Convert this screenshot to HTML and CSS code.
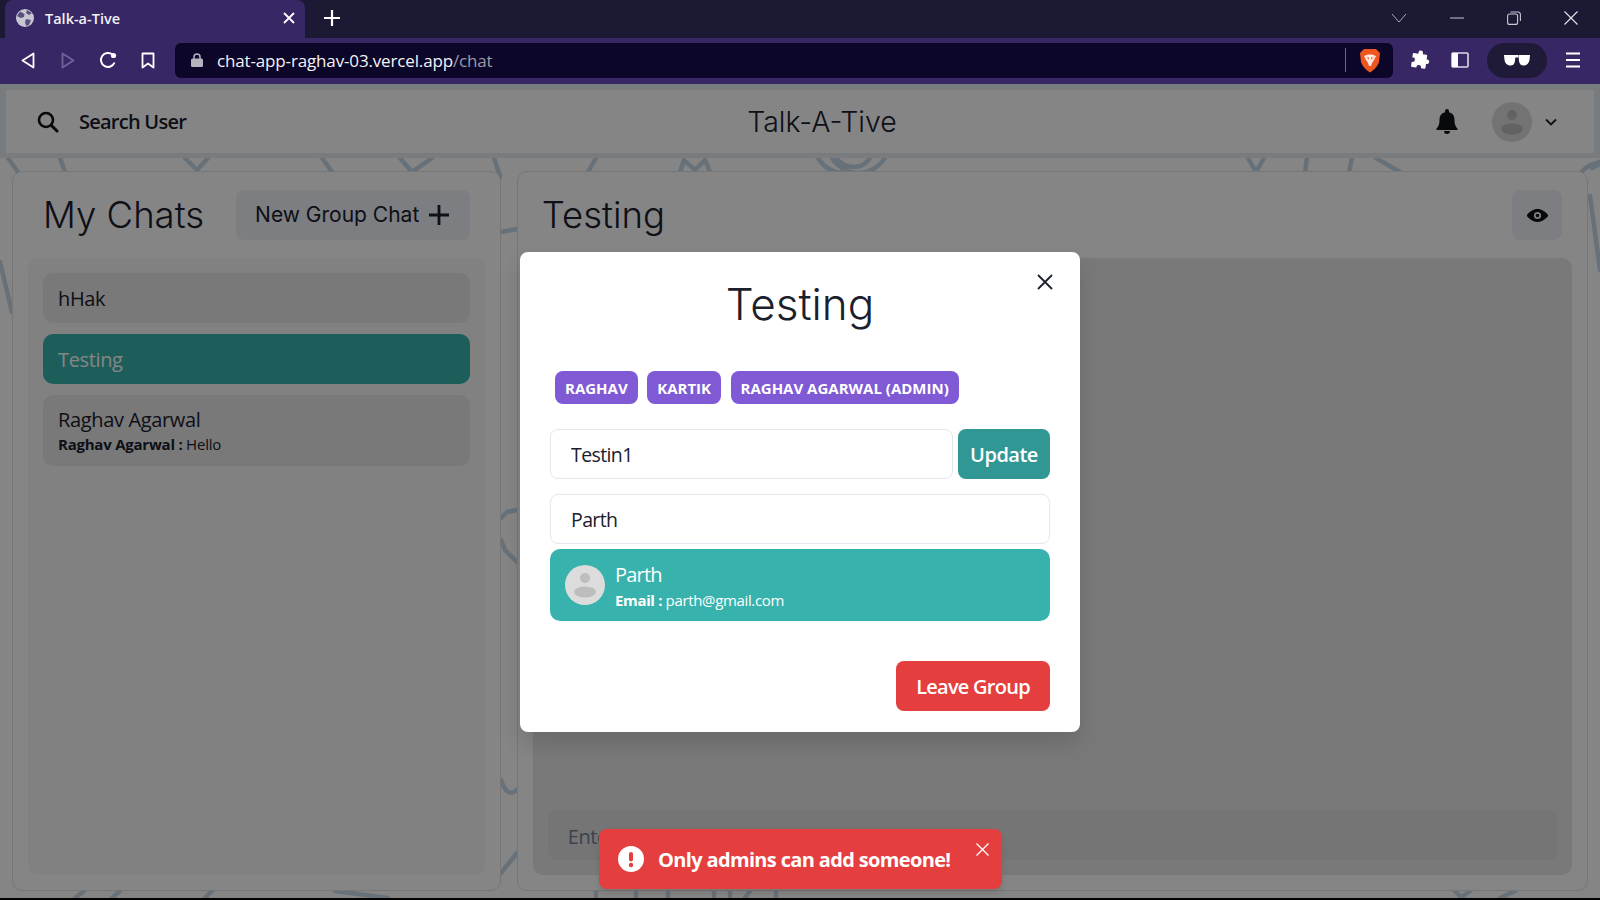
FILE: index.html
```html
<!DOCTYPE html>
<html lang="en">
<head>
    <meta charset="UTF-8">
    <meta name="viewport" content="width=device-width, initial-scale=1.0">
    <title>Talk-a-Tive</title>
    <link rel="stylesheet" href="styles.css">
</head>
<body>
    <!-- browser chrome -->
    <section class="tabstrip">
        <div class="tab">
            <svg class="globe" width="18" height="18" viewBox="0 0 18 18"><circle cx="9" cy="9" r="9" fill="#c9c6d3"/><path d="M4 2.500 8.500 5 8 8 4.500 9 1 7ZM10 10l5 1-2 5-3 1-1-4ZM11 1l5 3-3 2-3-2Z" fill="#5a5080"/></svg>
            <span class="tab-title">Talk-a-Tive</span>
            <svg class="tab-close" width="12" height="12" viewBox="0 0 12 12"><path d="M1 1 11 11M11 1 1 11" stroke="#fff" stroke-width="1.800"/></svg>
        </div>
        <svg class="new-tab" width="16" height="16" viewBox="0 0 16 16"><path d="M8 0V16M0 8H16" stroke="#fff" stroke-width="2.200"/></svg>
        <div class="win-controls">
            <svg width="16" height="10" viewBox="0 0 16 10"><path d="M1 1 8 9 15 1" fill="none" stroke="#a9a7b8" stroke-width="1"/></svg>
            <svg width="14" height="2" viewBox="0 0 14 2"><path d="M0 1H14" stroke="#a9a7b8" stroke-width="1.200"/></svg>
            <svg width="14" height="14" viewBox="0 0 14 14"><rect x=".6" y="3" width="10" height="10.400" rx="2" fill="none" stroke="#c9c8d2" stroke-width="1.100"/><path d="M3.500 1H11a2.400 2.400 0 0 1 2.400 2.400V10" fill="none" stroke="#c9c8d2" stroke-width="1.100"/></svg>
            <svg width="14" height="14" viewBox="0 0 14 14"><path d="M.5.500 13.500 13.500M13.500.500.5 13.500" stroke="#e6e5ea" stroke-width="1.100"/></svg>
        </div>
    </section>

    <section class="toolbar">
        <div class="tool-btn"><svg width="14" height="17" viewBox="0 0 14 17"><path d="M12.500 1.500 1.500 8.500 12.500 15.500Z" fill="none" stroke="#fff" stroke-width="1.800" stroke-linejoin="round"/></svg></div>
        <div class="tool-btn"><svg width="14" height="17" viewBox="0 0 14 17"><path d="M1.500 1.500 12.500 8.500 1.500 15.500Z" fill="none" stroke="#6f6396" stroke-width="1.800" stroke-linejoin="round"/></svg></div>
        <div class="tool-btn"><svg width="18" height="18" viewBox="0 0 18 18"><path d="M15.500 11.500A7 7 0 1 1 13.500 3.600" fill="none" stroke="#fff" stroke-width="2"/><circle cx="14.500" cy="4.500" r="2.600" fill="#fff"/></svg></div>
        <div class="tool-btn"><svg width="14" height="17" viewBox="0 0 14 17"><path d="M1.500 1.500H12.500V15.500L7 11.500 1.500 15.500Z" fill="none" stroke="#fff" stroke-width="1.800" stroke-linejoin="round"/></svg></div>

        <div class="address">
            <svg class="lock" width="12" height="14" viewBox="0 0 12 14"><path d="M3 6V4a3 3 0 0 1 6 0v2" fill="none" stroke="#b5b3bd" stroke-width="1.500"/><rect y="5.500" width="12" height="8.500" rx="1.500" fill="#b5b3bd"/></svg>
            <span class="url">chat-app-raghav-03.vercel.app<span class="url-path">/chat</span></span>
            <span class="address-sep"></span>
            <svg class="brave" width="22" height="25" viewBox="0 0 22 25"><path d="M5 1H17L21 5 20 14C19 18 14 23 11 24.500 8 23 3 18 2 14L1 5Z" fill="#f1561f"/><path d="M5 8 9 6.500H13L17 8 15 12 13 15 12 18H10L9 15 7 12Z" fill="#ffe9dc"/><path d="M7.500 9.500H10V11.500ZM14.500 9.500H12V11.500Z" fill="#f1561f"/></svg>
        </div>

        <div class="tool-btn"><svg width="20" height="20" viewBox="0 0 20 20"><path d="M8 1a2.500 2.500 0 0 1 4 1.500V4h3.500a1 1 0 0 1 1 1v3.500H18a2.500 2.500 0 0 1 0 4.500h-1.500V17a1 1 0 0 1-1 1H12v-1.500a2.500 2.500 0 0 0-4.500 0V18H3a1 1 0 0 1-1-1v-4h1.500a2.500 2.500 0 0 0 0-4.500H2V5a1 1 0 0 1 1-1h4.500V2.500Z" fill="#fff" transform="rotate(8 10 10)"/></svg></div>
        <div class="tool-btn"><svg width="18" height="16" viewBox="0 0 18 16"><rect x="1" y="1" width="16" height="14" rx="1" fill="none" stroke="#dcdae6" stroke-width="1.600"/><rect x="1" y="1" width="6" height="14" fill="#fff"/></svg></div>
        <div class="guest-pill"><svg width="26" height="12" viewBox="0 0 26 12"><path d="M0 1H11.500L11 7C10.500 10 9 11.500 6.500 11.500 3 11.500 1 9 .5 6ZM26 1H14.500L15 7C15.500 10 17 11.500 19.500 11.500 23 11.500 25 9 25.500 6ZM11 1H15V3.500H11Z" fill="#fff"/></svg></div>
        <div class="tool-btn"><svg width="16" height="16" viewBox="0 0 16 16"><path d="M1 1.500H15M1 8H15M1 14.500H15" stroke="#fff" stroke-width="1.800"/></svg></div>
    </section>

    <!-- the app -->
    <main class="page">
        <svg class="doodles" viewBox="0 0 1600 814" width="1600" height="814">
            <g transform="translate(0 -84)" fill="none" stroke="#c6d8e8" stroke-width="4.500" stroke-linecap="round">
                <path d="M8 158 18 172M60 158 65 172M185 158 197 170 208 158M322 158 332 172M400 158 412 172 432 158M494 158 500 176 496 186M588 172 596 158M680 172 684 160 695 170 705 160 710 172"/>
                <path d="M818 158C826 170 836 175 850 172 840 168 834 162 832 158M850 172C866 176 878 168 885 158M836 158C846 170 862 170 870 158"/>
                <path d="M1248 158 1256 172 1264 158M1307 158 1305 172M1352 158 1349 172M1376 158 1400 172M1600 162C1590 164 1584 168 1580 174"/>
                <path d="M0 262 12 312M1590 196 1600 270M1592 168 1600 164M501 232 517 229M501 518 507 512 517 510M501 540 505 550 517 562M501 780C505 792 510 796 517 790M501 873 517 853"/>
                <path d="M75 898 84 891M112 898 120 891M205 898 212 891M335 891 388 898M596 891V898M636 891V898M668 891V898M714 891V898M730 891V898M750 891 745 898M776 891V898M1455 891 1462 898M1470 891 1460 898M1500 898 1515 891"/>
            </g>
        </svg>

        <header class="topbar">
            <div class="search-btn">
                <svg width="22" height="22" viewBox="0 0 22 22"><circle cx="9" cy="9" r="7" fill="none" stroke="#101216" stroke-width="2.600"/><path d="M14.200 14.200 20 20" stroke="#101216" stroke-width="3" stroke-linecap="round"/></svg>
                <span>Search User</span>
            </div>
            <h1 class="brand">Talk-A-Tive</h1>
            <div class="topbar-right">
                <svg class="bell" width="22" height="26" viewBox="0 0 22 26"><path d="M11 0a2 2 0 0 1 2 2v1.200c3.800.8 5.500 4 5.500 7.800 0 5 1.500 7 3 8.500.5.800 0 1.500-1 1.500H1.500c-1 0-1.500-.7-1-1.500C2 18 3.500 16 3.500 11c0-3.800 1.700-7 5.500-7.800V2a2 2 0 0 1 2-2ZM8 22h6a3 3 0 0 1-6 0Z" fill="#101216"/></svg>
                <svg class="avatar" width="40" height="40" viewBox="0 0 40 40"><circle cx="20" cy="20" r="20" fill="#dcdcdc"/><circle cx="20" cy="13" r="5" fill="#bdbdbd"/><ellipse cx="20" cy="27" rx="11" ry="5.500" fill="#bdbdbd"/></svg>
                <svg class="chevron" width="12" height="8" viewBox="0 0 12 8"><path d="M1 1.500 6 6.500 11 1.500" fill="none" stroke="#1a202c" stroke-width="1.800"/></svg>
            </div>
        </header>

        <div class="panels">
            <section class="panel my-chats">
                <div class="panel-head">
                    <h2 class="panel-title">My Chats</h2>
                    <div class="group-btn">
                        <span>New Group Chat</span>
                        <svg width="22" height="22" viewBox="0 0 22 22"><path d="M11 1V21M1 11H21" stroke="#1a202c" stroke-width="2.800"/></svg>
                    </div>
                </div>
                <div class="chat-list">
                    <div class="chat-item"><div class="chat-name">hHak</div></div>
                    <div class="chat-item active"><div class="chat-name">Testing</div></div>
                    <div class="chat-item tall">
                        <div class="chat-name">Raghav Agarwal</div>
                        <div class="chat-last"><b>Raghav Agarwal :</b> Hello</div>
                    </div>
                </div>
            </section>

            <section class="panel chat-box">
                <div class="panel-head">
                    <h2 class="panel-title">Testing</h2>
                    <div class="eye-btn">
                        <svg width="21" height="21" viewBox="0 0 24 24"><path d="M23.400 10.500C20.800 7.600 16.400 4.500 12 4.600 7.600 4.500 3.200 7.600.6 10.500a2.200 2.200 0 0 0 0 3C3.200 16.400 7.500 19.500 12 19.400c4.500.1 8.800-3 11.400-5.900a2.200 2.200 0 0 0 0-3ZM7.900 12a4.100 4.100 0 1 1 8.200 0 4.100 4.100 0 0 1-8.200 0Z" fill="#101216"/><circle cx="12" cy="12" r="2" fill="#101216"/></svg>
                    </div>
                </div>
                <div class="messages">
                    <input class="message-input" placeholder="Enter a message..">
                </div>
            </section>
        </div>

        <!-- modal open over everything -->
        <div class="overlay">
            <div class="modal">
                <svg class="modal-close" width="16" height="16" viewBox="0 0 16 16"><path d="M1 1 15 15M15 1 1 15" stroke="#1a202c" stroke-width="1.800"/></svg>
                <h2 class="modal-title">Testing</h2>
                <div class="chips">
                    <span class="chip">Raghav</span>
                    <span class="chip">Kartik</span>
                    <span class="chip">Raghav Agarwal (Admin)</span>
                </div>
                <div class="rename-row">
                    <input class="field" value="Testin1">
                    <div class="btn btn-update">Update</div>
                </div>
                <input class="field field-full" value="Parth">
                <div class="user-result">
                    <svg class="avatar" width="40" height="40" viewBox="0 0 40 40"><circle cx="20" cy="20" r="20" fill="#dcdcdc"/><circle cx="20" cy="13" r="5" fill="#bdbdbd"/><ellipse cx="20" cy="27" rx="11" ry="5.500" fill="#bdbdbd"/></svg>
                    <div>
                        <div class="user-name">Parth</div>
                        <div class="user-mail"><b>Email :</b> parth@gmail.com</div>
                    </div>
                </div>
                <div class="modal-foot">
                    <div class="btn btn-leave">Leave Group</div>
                </div>
            </div>

            <div class="toast">
                <svg width="26" height="26" viewBox="0 0 26 26"><circle cx="13" cy="13" r="13" fill="#fff"/><rect x="11" y="6" width="4" height="9.500" rx="2" fill="#e53e3e"/><circle cx="13" cy="19" r="2.200" fill="#e53e3e"/></svg>
                <span class="toast-text">Only admins can add someone!</span>
                <svg class="toast-close" width="13" height="13" viewBox="0 0 13 13"><path d="M.5.500 12.500 12.500M12.500.500.5 12.500" stroke="#fff" stroke-width="1.300"/></svg>
            </div>
        </div>
    </main>
</body>
</html>
```

FILE: styles.css
```css
* {
    box-sizing: border-box;
}

html, body {
    height: 100%;
}

body {
    margin: 0;
    display: flex;
    flex-direction: column;
    overflow: hidden;
    background-color: #000;
    font-family: "Open Sans", "Noto Sans", sans-serif;
    color: #1a202c;
}

h1, h2 {
    margin: 0;
    font-weight: 300;
}

/* browser chrome */
.tabstrip {
    height: 38px;
    display: flex;
    align-items: center;
    padding-left: 5px;
    background-color: #1c1934;
}

.tab {
    width: 300px;
    height: 100%;
    display: flex;
    align-items: center;
    padding: 0 10px 2px 11px;
    background-color: #372865;
    border-radius: 8px 8px 0 0;
}

.tab-title {
    flex: 1;
    margin-left: 11px;
    font-size: 14.5px;
    font-weight: 600;
    color: #f1f0f5;
}

.new-tab {
    margin-left: 19px;
    margin-bottom: 2px;
}

.win-controls {
    margin-left: auto;
    width: 209px;
    padding-right: 22px;
    padding-bottom: 2px;
    display: flex;
    align-items: center;
    justify-content: space-between;
}

.toolbar {
    height: 46px;
    display: flex;
    align-items: center;
    padding: 0 7px 2px 8px;
    background-color: #372865;
}

.tool-btn {
    width: 40px;
    height: 35px;
    flex-shrink: 0;
    display: flex;
    align-items: center;
    justify-content: center;
}

.address {
    flex: 1;
    height: 35px;
    margin: 0 7px;
    padding: 0 12px 0 16px;
    display: flex;
    align-items: center;
    background-color: #0c0628;
    border-radius: 6px;
}

.url {
    margin-left: 14px;
    font-size: 17px;
    letter-spacing: -0.15px;
    color: #f4f3f7;
}

.url-path {
    color: #9d9aa8;
}

.address-sep {
    width: 1px;
    height: 24px;
    margin-left: auto;
    margin-right: 13px;
    background-color: #6a6780;
}

.guest-pill {
    width: 60px;
    height: 35px;
    margin: 0 6px 0 7px;
    display: flex;
    align-items: center;
    justify-content: center;
    background-color: #1e1a38;
    border-radius: 18px;
}

/* app */
.page {
    position: relative;
    height: 814px;
    background-color: #fff;
}

.doodles {
    position: absolute;
    top: 0;
    left: 0;
    filter: blur(0.7px);
}

.topbar {
    position: relative;
    height: 74px;
    display: flex;
    align-items: center;
    padding: 0 37px 0 31px;
    background-color: #fff;
    border: 6px solid #e8edf3;
    border-bottom-width: 5px;
}

.search-btn {
    display: flex;
    align-items: center;
    gap: 20px;
    font-size: 20px;
    font-weight: 600;
    letter-spacing: -0.75px;
}

.brand {
    position: absolute;
    left: 0;
    right: 0;
    text-align: center;
    padding-left: 44px;
    font-family: Inter, sans-serif;
    font-size: 28.5px;
    pointer-events: none;
}

.topbar-right {
    margin-left: auto;
    display: flex;
    align-items: center;
}

.bell {
    margin-right: 34px;
}

.chevron {
    margin-left: 13px;
}

.panels {
    position: relative;
    display: flex;
    gap: 16px;
    padding: 13px 12px 0;
}

.panel {
    height: 720px;
    padding: 0 15px 15px;
    display: flex;
    flex-direction: column;
    background-color: #fff;
    border: 1px solid #e2e2e2;
    border-radius: 10px;
}

.my-chats {
    width: 489px;
}

.chat-box {
    width: 1072px;
}

.panel-head {
    height: 86px;
    flex-shrink: 0;
    display: flex;
    align-items: center;
    justify-content: space-between;
    padding: 0 9px 0 15px;
}

.chat-box .panel-head {
    padding: 0 10px 0 9px;
}

.panel-title {
    font-family: Inter, sans-serif;
    font-size: 36.5px;
}

.group-btn {
    width: 234px;
    height: 50px;
    margin-right: 6px;
    padding-bottom: 1px;
    display: flex;
    align-items: center;
    justify-content: center;
    gap: 9px;
    font-family: Inter, sans-serif;
    font-size: 21px;
    background-color: #edf2f7;
    border-radius: 8px;
}

.eye-btn {
    width: 50px;
    height: 50px;
    display: flex;
    align-items: center;
    justify-content: center;
    background-color: #edf2f7;
    border-radius: 8px;
}

.chat-list {
    flex: 1;
    padding: 15px;
    background-color: #f8f8f8;
    border-radius: 10px;
    display: flex;
    flex-direction: column;
    gap: 11px;
}

.chat-item {
    height: 50px;
    padding: 2px 15px 0;
    display: flex;
    flex-direction: column;
    justify-content: center;
    background-color: #e8e8e8;
    border-radius: 10px;
}

.chat-item.tall {
    height: 71px;
    padding-top: 0;
}

.chat-item.active {
    background-color: #38b2ac;
    color: #fff;
}

.chat-name {
    font-size: 20px;
    line-height: 26px;
    letter-spacing: -0.35px;
}

.chat-last {
    font-size: 15px;
    line-height: 22px;
    letter-spacing: -0.23px;
}

.messages {
    flex: 1;
    padding: 15px;
    display: flex;
    flex-direction: column;
    justify-content: flex-end;
    background-color: #e8e8e8;
    border-radius: 10px;
}

.message-input {
    height: 50px;
    padding: 2px 20px 0;
    font: 20px "Open Sans", sans-serif;
    letter-spacing: -0.4px;
    background-color: #e0e0e0;
    border: none;
    border-radius: 8px;
}

.message-input::placeholder {
    color: #718096;
}

/* modal layer */
.overlay {
    position: absolute;
    top: 0;
    left: 0;
    right: 0;
    bottom: 0;
    display: flex;
    justify-content: center;
    padding-top: 168px;
    background-color: rgba(0, 0, 0, 0.48);
}

.modal {
    position: relative;
    width: 560px;
    height: 480px;
    padding: 0 30px;
    background-color: #fff;
    border-radius: 8px;
    box-shadow: 0 12px 20px rgba(0, 0, 0, 0.12);
}

.modal-close {
    position: absolute;
    top: 22px;
    right: 27px;
}

.modal-title {
    padding-top: 25px;
    height: 119px;
    text-align: center;
    font-family: Inter, sans-serif;
    font-size: 44px;
}

.chips {
    display: flex;
    gap: 9.500px;
    padding-left: 5px;
}

.chip {
    height: 33px;
    padding: 0 10px;
    display: flex;
    align-items: center;
    font-size: 15px;
    font-weight: 700;
    text-transform: uppercase;
    color: #fff;
    background-color: #805ad5;
    border-radius: 8px;
}

.rename-row {
    display: flex;
    gap: 5px;
    margin-top: 25px;
}

.field {
    flex: 1;
    height: 50px;
    padding: 1px 20px 0;
    font: 19.5px "Open Sans", sans-serif;
    letter-spacing: -0.6px;
    color: #1a202c;
    background-color: #fff;
    border: 1px solid #e2e8f0;
    border-radius: 8px;
}

.field-full {
    display: block;
    width: 100%;
    margin-top: 15px;
}

.btn {
    height: 50px;
    display: flex;
    align-items: center;
    justify-content: center;
    font-size: 20px;
    font-weight: 600;
    color: #fff;
    border-radius: 8px;
}

.btn-update {
    width: 92px;
    letter-spacing: -0.5px;
    background-color: #319795;
}

.btn-leave {
    width: 154px;
    padding-top: 1px;
    letter-spacing: -0.75px;
    background-color: #e53e3e;
}

.user-result {
    height: 72px;
    margin-top: 5px;
    padding: 0 15px;
    display: flex;
    align-items: center;
    gap: 10px;
    color: #fff;
    background-color: #38b2ac;
    border-radius: 10px;
}

.user-name {
    padding-top: 2px;
    font-size: 20px;
    line-height: 27px;
    letter-spacing: -0.8px;
}

.user-mail {
    font-size: 15px;
    line-height: 24px;
    letter-spacing: -0.35px;
}

.modal-foot {
    margin-top: 40px;
    display: flex;
    justify-content: flex-end;
}

.toast {
    position: absolute;
    left: 599px;
    bottom: 9px;
    width: 403px;
    height: 60px;
    padding: 0 19px;
    display: flex;
    align-items: center;
    color: #fff;
    background-color: #e53e3e;
    border-radius: 8px;
    box-shadow: 0 4px 6px rgba(0, 0, 0, 0.1);
}

.toast-text {
    margin-left: 14px;
    font-size: 20px;
    font-weight: 700;
    letter-spacing: -0.65px;
}

.toast-close {
    position: absolute;
    top: 14px;
    right: 13px;
}
```
